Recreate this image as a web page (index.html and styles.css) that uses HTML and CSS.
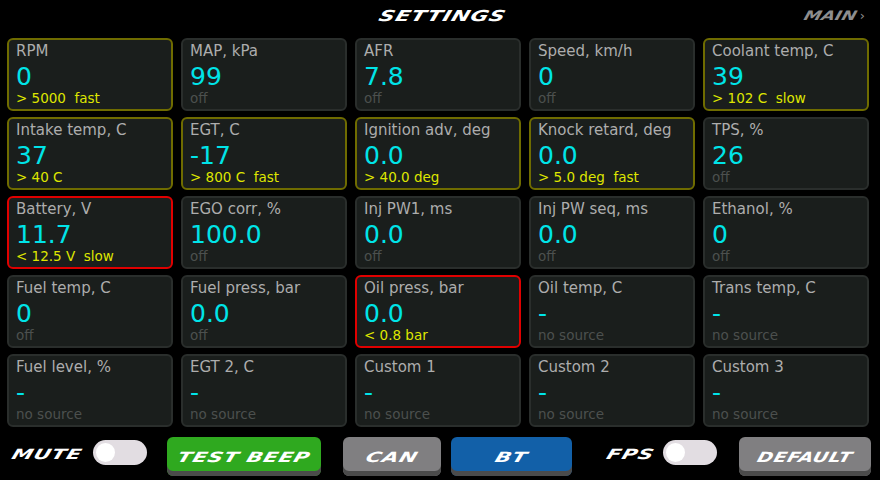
FILE: index.html
```html
<!DOCTYPE html>
<html>
<head>
  <link rel="stylesheet" href="styles.css">
</head>
<body>
  <div class="topbar">
    <div class="title"><span>SETTINGS</span></div>
    <div class="nav"><span>MAIN</span> ›</div>
  </div>

  <div class="grid">
    <div class="cell warn"><div class="label">RPM</div><div class="value">0</div><div class="alarm">&gt; 5000&nbsp; fast</div></div>
    <div class="cell"><div class="label">MAP, kPa</div><div class="value">99</div><div class="alarm off">off</div></div>
    <div class="cell"><div class="label">AFR</div><div class="value">7.8</div><div class="alarm off">off</div></div>
    <div class="cell"><div class="label">Speed, km/h</div><div class="value">0</div><div class="alarm off">off</div></div>
    <div class="cell warn"><div class="label">Coolant temp, C</div><div class="value">39</div><div class="alarm">&gt; 102 C&nbsp; slow</div></div>

    <div class="cell warn"><div class="label">Intake temp, C</div><div class="value">37</div><div class="alarm">&gt; 40 C</div></div>
    <div class="cell warn"><div class="label">EGT, C</div><div class="value">-17</div><div class="alarm">&gt; 800 C&nbsp; fast</div></div>
    <div class="cell warn"><div class="label">Ignition adv, deg</div><div class="value">0.0</div><div class="alarm">&gt; 40.0 deg</div></div>
    <div class="cell warn"><div class="label">Knock retard, deg</div><div class="value">0.0</div><div class="alarm">&gt; 5.0 deg&nbsp; fast</div></div>
    <div class="cell"><div class="label">TPS, %</div><div class="value">26</div><div class="alarm off">off</div></div>

    <div class="cell alert"><div class="label">Battery, V</div><div class="value">11.7</div><div class="alarm">&lt; 12.5 V&nbsp; slow</div></div>
    <div class="cell"><div class="label">EGO corr, %</div><div class="value">100.0</div><div class="alarm off">off</div></div>
    <div class="cell"><div class="label">Inj PW1, ms</div><div class="value">0.0</div><div class="alarm off">off</div></div>
    <div class="cell"><div class="label">Inj PW seq, ms</div><div class="value">0.0</div><div class="alarm off">off</div></div>
    <div class="cell"><div class="label">Ethanol, %</div><div class="value">0</div><div class="alarm off">off</div></div>

    <div class="cell"><div class="label">Fuel temp, C</div><div class="value">0</div><div class="alarm off">off</div></div>
    <div class="cell"><div class="label">Fuel press, bar</div><div class="value">0.0</div><div class="alarm off">off</div></div>
    <div class="cell alert"><div class="label">Oil press, bar</div><div class="value">0.0</div><div class="alarm">&lt; 0.8 bar</div></div>
    <div class="cell"><div class="label">Oil temp, C</div><div class="value">-</div><div class="alarm off">no source</div></div>
    <div class="cell"><div class="label">Trans temp, C</div><div class="value">-</div><div class="alarm off">no source</div></div>

    <div class="cell"><div class="label">Fuel level, %</div><div class="value">-</div><div class="alarm off">no source</div></div>
    <div class="cell"><div class="label">EGT 2, C</div><div class="value">-</div><div class="alarm off">no source</div></div>
    <div class="cell"><div class="label">Custom 1</div><div class="value">-</div><div class="alarm off">no source</div></div>
    <div class="cell"><div class="label">Custom 2</div><div class="value">-</div><div class="alarm off">no source</div></div>
    <div class="cell"><div class="label">Custom 3</div><div class="value">-</div><div class="alarm off">no source</div></div>
  </div>

  <div class="bottombar">
    <div class="switch-group mute">
      <span class="caption"><span>MUTE</span></span>
      <div class="switch"><div class="knob"></div></div>
    </div>
    <button class="btn green beep"><span>TEST BEEP</span></button>
    <button class="btn gray can"><span>CAN</span></button>
    <button class="btn blue bt"><span>BT</span></button>
    <div class="switch-group fps">
      <span class="caption"><span>FPS</span></span>
      <div class="switch"><div class="knob"></div></div>
    </div>
    <button class="btn gray default"><span>DEFAULT</span></button>
  </div>
</body>
</html>
```

FILE: styles.css
```css
* {
  margin: 0;
  padding: 0;
  box-sizing: border-box;
}

body {
  width: 880px;
  height: 480px;
  background: #000;
  color: #fff;
  font-family: "DejaVu Sans", sans-serif;
  overflow: hidden;
}

/* wide slanted lettering for headings and buttons */
.title span,
.nav span,
.caption span,
.btn span {
  display: inline-block;
  font-family: "DejaVu Sans", sans-serif;
  font-weight: bold;
  font-style: italic;
  transform: scaleX(1.5) skewX(-12deg);
}

/* top bar */
.topbar {
  height: 38px;
  position: relative;
  display: flex;
  justify-content: center;
  align-items: flex-start;
}

.title {
  margin-top: 7px;
  margin-left: 6px;
  font-size: 15px;
  line-height: 18px;
  letter-spacing: 0.5px;
  color: #fff;
}

.title span {
  transform: scaleX(1.45) skewX(-12deg);
}

.nav {
  position: absolute;
  right: 15px;
  top: 8px;
  font-size: 13px;
  line-height: 16px;
  color: #8e8e8e;
}

.nav span {
  margin-right: 6px;
  transform: scaleX(1.35) skewX(-12deg);
}

/* parameter grid */
.grid {
  display: grid;
  grid-template-columns: repeat(5, 166px);
  grid-template-rows: repeat(5, 73px);
  column-gap: 8px;
  row-gap: 6px;
  padding-left: 7px;
}

.cell {
  background: #1a1e1c;
  border: 2px solid #2a2e2c;
  border-radius: 6px;
  padding: 2px 0 0 7px;
  display: flex;
  flex-direction: column;
}

.cell.warn {
  border-color: #6f6c00;
}

.cell.alert {
  border-color: #e00000;
}

.label {
  font-size: 15px;
  line-height: 19px;
  color: #adadad;
}

.value {
  margin-top: 3px;
  font-size: 25px;
  line-height: 26px;
  color: #00e4e8;
}

.alarm {
  font-size: 13.5px;
  line-height: 16px;
  color: #dfe600;
}

.alarm.off {
  color: #4c504e;
}

/* bottom controls */
.bottombar {
  height: 53px;
  display: flex;
  align-items: center;
  padding-top: 6px;
}

.switch-group {
  display: flex;
  align-items: center;
  margin-bottom: 8px;
}

.caption {
  display: inline-block;
  font-size: 14px;
  letter-spacing: 0.5px;
  color: #fff;
  text-align: center;
  margin-top: 2px;
}

.mute .caption {
  width: 75px;
  margin-right: 8px;
}

.fps .caption {
  width: 52px;
  margin-right: 6px;
}

.switch {
  width: 54px;
  height: 25px;
  border-radius: 13px;
  background: #e2dde2;
  padding: 3px;
}

.knob {
  width: 19px;
  height: 19px;
  border-radius: 50%;
  background: #fff;
}

.mute {
  margin-left: 10px;
}

.btn {
  border: none;
  height: 39px;
  border-radius: 6px;
  font-size: 14px;
  letter-spacing: 0.5px;
  color: #fff;
  padding-top: 1px;
  box-shadow: inset 0 -5px 0 #4b4b4b;
}

.btn.green {
  background: #2fa91f;
}

.btn.gray {
  background: #807f81;
}

.btn.blue {
  background: #1260a8;
}

.beep {
  width: 154px;
  margin-left: 20px;
}

.can {
  width: 98px;
  margin-left: 22px;
}

.bt {
  width: 121px;
  margin-left: 10px;
}

.fps {
  margin-left: 33px;
}

.default {
  width: 132px;
  margin-left: 22px;
}

.default span {
  transform: scaleX(1.35) skewX(-12deg);
}
```
